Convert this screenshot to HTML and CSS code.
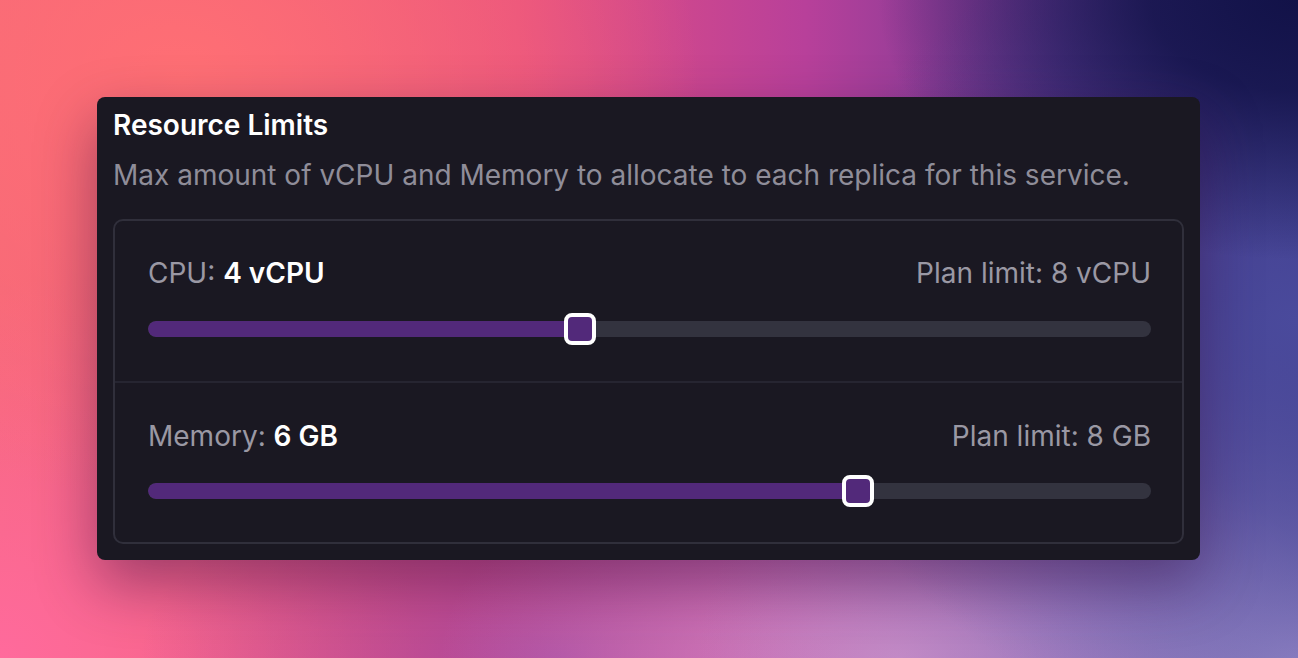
FILE: index.html
```html
<!DOCTYPE html>
<html lang="en">
<head>
<meta charset="utf-8">
<title>Resource Limits</title>
<link rel="stylesheet" href="styles.css">
</head>
<body>
<div class="stage">
  <section class="card">
    <h2 class="title">Resource Limits</h2>
    <p class="desc">Max amount of vCPU and Memory to allocate to each replica for this service.</p>
    <div class="panel">
      <div class="row">
        <div class="row-head">
          <span class="label">CPU: <strong class="value">4 vCPU</strong></span>
          <span class="limit">Plan limit: 8 vCPU</span>
        </div>
        <div class="slider" style="--f:0.42857">
          <div class="track"><div class="fill"></div></div>
          <div class="thumb"></div>
        </div>
      </div>
      <div class="row">
        <div class="row-head">
          <span class="label">Memory: <strong class="value">6 GB</strong></span>
          <span class="limit">Plan limit: 8 GB</span>
        </div>
        <div class="slider" style="--f:0.71429">
          <div class="track"><div class="fill"></div></div>
          <div class="thumb"></div>
        </div>
      </div>
    </div>
  </section>
</div>
</body>
</html>
```
FILE: styles.css
```css
* { box-sizing: border-box; }
html, body { margin: 0; padding: 0; }
body {
  width: 1298px;
  height: 658px;
  overflow: hidden;
  font-family: Inter, "Noto Sans", sans-serif;
  background-color: #c45a98;
  background-image:
    radial-gradient(ellipse 420px 260px at 1298px 0px, #121248 0%, rgba(18,18,72,0.85) 35%, rgba(40,35,110,0) 100%),
    radial-gradient(ellipse 500px 420px at 1298px 320px, #4a4a9c 0%, rgba(74,74,156,0) 100%),
    radial-gradient(ellipse 600px 360px at 1298px 658px, #9486c6 0%, rgba(148,134,198,0) 100%),
    radial-gradient(ellipse 460px 240px at 900px 658px, #d98cc6 0%, rgba(217,140,198,0) 100%),
    radial-gradient(ellipse 420px 200px at 560px 658px, #a8489e 0%, rgba(168,72,158,0) 100%),
    radial-gradient(ellipse 520px 420px at 180px 80px, #ff6f74 0%, rgba(255,111,116,0) 100%),
    radial-gradient(ellipse 420px 380px at 0px 658px, #ff6a9c 0%, rgba(255,106,156,0) 100%),
    linear-gradient(90deg, #f4677a 0%, #e64f80 40%, #b8409a 62%, #6a3a96 82%, #34307c 100%);
}
.stage {
  padding: 97px 98px 0 97px;
}
.card {
  background: #1a1822;
  border-radius: 8px;
  padding: 10px 16px 16px 16px;
  box-shadow: 0 24px 60px rgba(50, 10, 60, 0.45);
}
.title {
  margin: 0;
  font-size: 28px;
  line-height: 36px;
  font-weight: 600;
  color: #ffffff;
}
.desc {
  margin: 14px 0 0 0;
  font-size: 28px;
  line-height: 36px;
  font-weight: 400;
  color: #8f8d99;
}
.panel {
  margin-top: 26px;
  border: 2px solid #302f3b;
  border-radius: 10px;
}
.row {
  padding: 34px 31px 36px 33px;
}
.row + .row {
  border-top: 2px solid #262531;
  padding-top: 35px;
  padding-bottom: 35px;
}
.row-head {
  display: flex;
  justify-content: space-between;
  align-items: center;
  font-size: 28px;
  line-height: 36px;
  color: #9a98a4;
}
.value {
  color: #ffffff;
  font-weight: 600;
}
.slider {
  position: relative;
  height: 32px;
  margin-top: 22px;
  display: flex;
  align-items: center;
}
.row + .row .slider {
  margin-top: 21px;
}
.track {
  width: 100%;
  height: 16px;
  border-radius: 8px;
  background: #33333f;
  overflow: hidden;
}
.fill {
  height: 100%;
  width: calc(16px + (100% - 32px) * var(--f));
  background: #52297a;
  border-radius: 8px 0 0 8px;
}
.thumb {
  position: absolute;
  top: 0;
  left: calc((100% - 32px) * var(--f));
  width: 32px;
  height: 32px;
  border: 4px solid #ffffff;
  border-radius: 8px;
  background: #52297a;
}
```
